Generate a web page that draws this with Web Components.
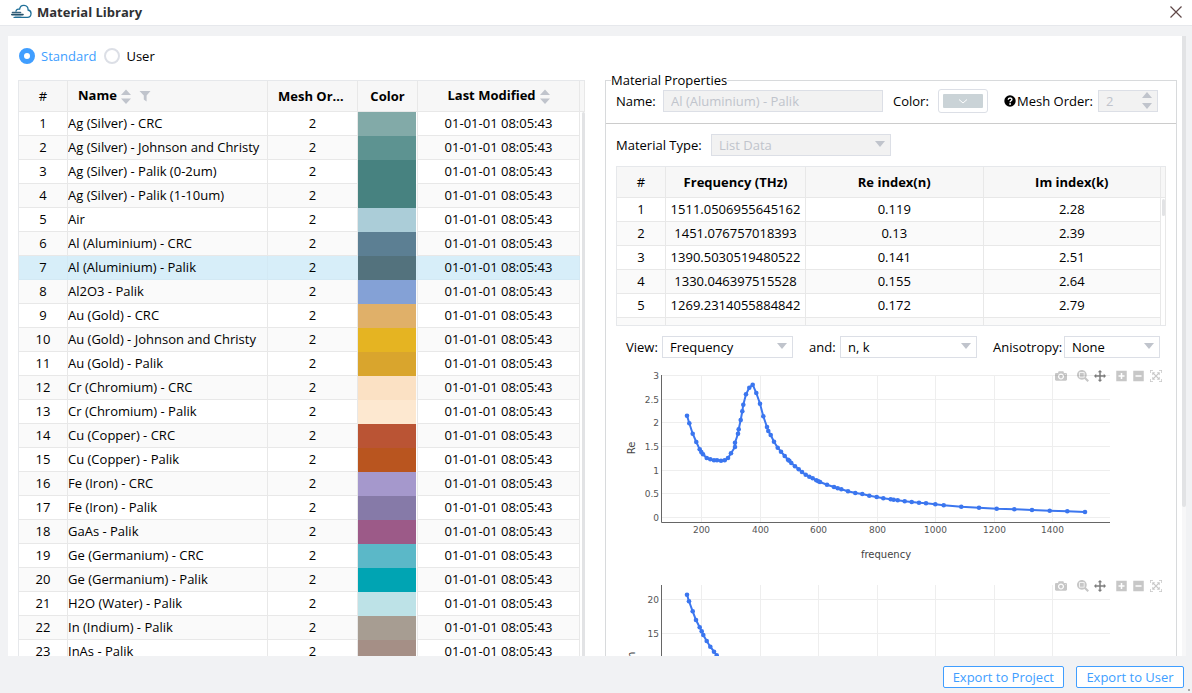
<!DOCTYPE html>
<html lang="en">
<head>
<meta charset="utf-8">
<title>Material Library</title>
<style>
html, body { margin: 0; height: 100%; }
body { font: 13px/16px "Open Sans", "Noto Sans", sans-serif; color: #000; overflow: hidden; }
</style>
</head>
<body>
<material-library></material-library>
<script>
const define = (name, html, setup) => {
  const template = document.createElement('template');
  template.innerHTML = html;
  customElements.define(name, class extends HTMLElement {
    connectedCallback() {
      if (this.shadowRoot) return;
      this.attachShadow({ mode: 'open' }).append(template.content.cloneNode(true));
      if (setup) setup(this, this.shadowRoot);
    }
  });
};

define('app-header', `
<style>
:host { display: flex; align-items: center; box-sizing: border-box; height: 26px; padding: 0 9px 2px 11px; background: #fff; border-bottom: 1px solid #e6e8ec; flex: none; }
h1 { margin: 0 auto 0 5px; font-size: 13px; line-height: 20px; font-weight: 700; color: #303133; }
button { border: 0; background: none; padding: 0; width: 14px; height: 14px; display: block; }
svg { display: block; }
</style>
<svg width="21" height="16" viewBox="0 0 21 16" fill="none" stroke="#1f7099" stroke-width="1.3" stroke-linecap="round">
  <path d="M5 7.2C5.200 5.600 7 4.800 8.600 5.200C9 2.500 11 1.200 13 1.300C15.600 1.500 17.200 3.400 17.100 6C19 6.400 20.200 8 20 10C19.800 12.200 18.300 13.300 16.500 13.300H3"/>
  <path d="M1.500 8.500H9.500" stroke="#35617c" stroke-width="1.600"/><path d="M.8 10.600H12" stroke="#24516b" stroke-width="1.600"/><path d="M4.500 12H10" stroke="#5d8aa4" stroke-width="1"/>
</svg>
<h1><slot></slot></h1>
<button type="button" aria-label="Close"><svg width="14" height="14" viewBox="0 0 14 14" stroke="#5f4747" stroke-width="1.200"><path d="M1.500 1.500L12.500 12.500M12.500 1.500L1.500 12.500"/></svg></button>
`);

define('source-picker', `
<style>
:host { display: flex; gap: 8px; height: 44px; padding-left: 1px; box-sizing: border-box; }
label { display: flex; align-items: center; gap: 6px; height: 40px; }
input { appearance: none; box-sizing: border-box; width: 16px; height: 16px; margin: 0; border: 2px solid #dcdfe6; border-radius: 50%; background: #fff; }
input:checked { border: 5px solid #409eff; }
input:checked + span { color: #409eff; }
</style>
<label><input type="radio" name="source" checked><span>Standard</span></label>
<label><input type="radio" name="source"><span>User</span></label>
`);

define('sort-arrows', `
<style>:host { display: inline-block; width: 10px; height: 16px; vertical-align: middle; } svg { display: block; }</style>
<svg width="10" height="16" viewBox="0 0 10 16" fill="#c0c4cc"><path d="M0 6L5 .5L10 6zM0 9.500L5 15L10 9.500z"/></svg>
`);

const gridStyle = `
:host { display: block; overflow: hidden; box-sizing: border-box; }
.frame { display: grid; grid-template-columns: minmax(0, 1fr) 5px; border: solid #e6e8eb; border-width: 1px 0 0 1px; }
table { width: 100%; table-layout: fixed; border-collapse: separate; border-spacing: 0; }
th, td { box-sizing: border-box; padding: 0; height: 24px; border: solid #e8e8e8; border-width: 0 1px 1px 0; text-align: center; font-weight: 400; white-space: nowrap; overflow: hidden; text-overflow: ellipsis; }
td { padding-bottom: 2px; }
thead th { height: 31px; background: #f7f7f7; font-weight: 700; }
thead th:first-child { font-weight: 400; }
tbody tr:nth-child(even) { background: #fafafa; }
.gutter { display: flex; flex-direction: column; }
.cap { box-sizing: border-box; flex: none; height: 31px; background: #f7f7f7; border: solid #e8e8e8; border-width: 0 1px 1px 0; }
.thumb { background: #e2e3e5; width: 3px; margin-left: auto; border-radius: 2px; }
`;

const materials = [
  ['Ag (Silver) - CRC', '#82aaa8'], ['Ag (Silver) - Johnson and Christy', '#5d9391'],
  ['Ag (Silver) - Palik (0-2um)', '#478280'], ['Ag (Silver) - Palik (1-10um)', '#478280'],
  ['Air', '#abcdd8'], ['Al (Aluminium) - CRC', '#5c7f93'], ['Al (Aluminium) - Palik', '#53727d'],
  ['Al2O3 - Palik', '#84a1d6'], ['Au (Gold) - CRC', '#e0b069'], ['Au (Gold) - Johnson and Christy', '#e5b422'],
  ['Au (Gold) - Palik', '#d9a52d'], ['Cr (Chromium) - CRC', '#fbe1c4'], ['Cr (Chromium) - Palik', '#fde8d0'],
  ['Cu (Copper) - CRC', '#ba5434'], ['Cu (Copper) - Palik', '#b9551f'], ['Fe (Iron) - CRC', '#a598cc'],
  ['Fe (Iron) - Palik', '#867aa8'], ['GaAs - Palik', '#9c5a88'], ['Ge (Germanium) - CRC', '#5bb8c8'],
  ['Ge (Germanium) - Palik', '#00a4b3'], ['H2O (Water) - Palik', '#bde2e7'], ['In (Indium) - Palik', '#a79d92'],
  ['InAs - Palik', '#a58f86']
];

define('material-table', `
<style>${gridStyle}
:host { flex: 1; min-height: 0; }
.name { text-align: left; }
thead .name { padding-left: 10px; }
thead .mesh { padding: 0 10px; }
sort-arrows { margin-left: 4px; }
svg { vertical-align: middle; margin-left: 8px; }
td.swatch { padding: 0 1px 0 0; border-bottom: 0; background-clip: content-box; }
tr.selected { background: #d7eef9 !important; }
tr.selected td { border-color: #d3e9f4; }
.thumb { flex: 1; }
</style>
<div class="frame">
<table>
<colgroup><col style="width:49px"><col><col style="width:90px"><col style="width:60px"><col style="width:162px"></colgroup>
<thead><tr><th>#</th><th class="name">Name<sort-arrows></sort-arrows><svg width="12" height="12" viewBox="0 0 12 12" fill="#c0c4cc"><path d="M.5 0H11.500L7.600 4.500V10.500L4.800 8.500V4.500z"/></svg></th><th class="mesh">Mesh Order</th><th>Color</th><th>Last Modified<sort-arrows></sort-arrows></th></tr></thead>
<tbody></tbody>
</table>
<div class="gutter"><div class="cap"></div><div class="thumb"></div></div>
</div>
`, (host, root) => {
  root.querySelector('tbody').innerHTML = materials.map(([name, color], i) =>
    `<tr${i === 6 ? ' class="selected"' : ''}><td>${i + 1}</td><td class="name">${name}</td><td>2</td><td class="swatch" style="background-color:${color}"></td><td>01-01-01 08:05:43</td></tr>`).join('');
});

define('index-table', `
<style>${gridStyle}
:host { height: 160px; border-bottom: 1px solid #e6e8eb; margin-top: 10px; }
.gutter { border-right: 1px solid #e8e8e8; margin-right: -1px; }
.frame { padding-right: 1px; grid-template-columns: minmax(0, 1fr) 4px; }
.cap { border-right: 0; }
.thumb { height: 17px; margin-top: 1px; }
</style>
<div class="frame">
<table>
<colgroup><col style="width:49px"><col style="width:140px"><col><col></colgroup>
<thead><tr><th>#</th><th>Frequency (THz)</th><th>Re index(n)</th><th>Im index(k)</th></tr></thead>
<tbody>
<tr><td>1</td><td>1511.0506955645162</td><td>0.119</td><td>2.28</td></tr>
<tr><td>2</td><td>1451.076757018393</td><td>0.13</td><td>2.39</td></tr>
<tr><td>3</td><td>1390.5030519480522</td><td>0.141</td><td>2.51</td></tr>
<tr><td>4</td><td>1330.046397515528</td><td>0.155</td><td>2.64</td></tr>
<tr><td>5</td><td>1269.2314055884842</td><td>0.172</td><td>2.79</td></tr>
<tr><td></td><td></td><td></td><td></td></tr>
</tbody>
</table>
<div class="gutter"><div class="cap"></div><div class="thumb"></div></div>
</div>
`);

define('select-field', `
<style>
:host { display: flex; align-items: center; }
label { flex: none; width: var(--label); }
.box { position: relative; flex: 1; min-width: 0; }
select { appearance: none; display: block; box-sizing: border-box; width: 100%; height: 22px; padding: 0 24px 0 7px; border: 1px solid #dcdfe6; border-radius: 0; background: #fff; font: inherit; color: #000; opacity: 1; }
select:disabled { background: #f2f2f2; color: #c0c4cc; }
svg { position: absolute; right: 6px; top: 7px; pointer-events: none; }
</style>
<label for="field"></label>
<div class="box"><select id="field"><option></option></select><svg width="10" height="6" viewBox="0 0 10 6"><path d="M0 0H10L5 6z" fill="#c0c4cc"/></svg></div>
`, (host, root) => {
  root.querySelector('label').textContent = host.getAttribute('label');
  root.querySelector('option').textContent = host.getAttribute('value');
  root.querySelector('select').disabled = host.hasAttribute('disabled');
});

define('property-bar', `
<style>
:host { display: flex; align-items: center; height: 24px; padding: 1px 18px 10px 10px; border-bottom: 1px solid #ccc; }
label { flex: none; }
input { box-sizing: border-box; height: 22px; padding: 0 7px; border: 1px solid #dcdfe6; border-radius: 0; background: #f2f2f2; font: inherit; color: #c0c4cc; appearance: none; }
input[type=number] { appearance: textfield; }
.name { width: 47px; }
#name { flex: 1; min-width: 0; margin-right: 10px; }
.color { width: 45px; }
#color { box-sizing: border-box; width: 50px; height: 24px; margin: 0 16px 0 0; padding: 4px; border: 1px solid #dcdfe6; border-radius: 3px; background: #fff; }
#color svg { display: block; width: 40px; height: 14px; background: #cad3d7; border-radius: 1px; }
.mesh { display: flex; align-items: center; gap: 1px; width: 94px; }
.spin { position: relative; width: 60px; }
.spin input { width: 100%; display: block; }
.spin svg { position: absolute; right: 6px; top: 2px; }
</style>
<label class="name" for="name">Name:</label><input id="name" value="Al (Aluminium) - Palik" disabled>
<label class="color" for="color">Color:</label><button id="color" type="button" disabled><svg viewBox="0 0 40 14" fill="none" stroke="#fff"><path d="M16 5.500L20 9L24 5.500"/></svg></button>
<label class="mesh" for="mesh"><svg width="12" height="12" viewBox="0 0 12 12"><circle cx="6" cy="6" r="5.700"/><path d="M4.200 4.700C4.200 2.400 7.900 2.400 7.900 4.500C7.900 5.800 6.100 5.800 6.100 7.200" fill="none" stroke="#fff" stroke-width="1.400"/><circle cx="6.100" cy="9" r=".9" fill="#fff"/></svg>Mesh Order:</label>
<div class="spin"><input id="mesh" type="number" value="2" disabled><svg width="10" height="18" viewBox="0 0 10 18" fill="#c0c4cc"><path d="M0 6L5 0L10 6zM0 11L5 17L10 11z"/></svg></div>
`);

const icons = {
  Download: 'm500 450c-83 0-150-67-150-150 0-83 67-150 150-150 83 0 150 67 150 150 0 83-67 150-150 150z m400 150h-120c-16 0-34 13-39 29l-31 93c-6 15-23 28-40 28h-340c-16 0-34-13-39-28l-31-94c-6-15-23-28-40-28h-120c-55 0-100-45-100-100v-450c0-55 45-100 100-100h800c55 0 100 45 100 100v450c0 55-45 100-100 100z m-400-550c-138 0-250 112-250 250 0 138 112 250 250 250 138 0 250-112 250-250 0-138-112-250-250-250z m365 380c-19 0-35 16-35 35 0 19 16 35 35 35 19 0 35-16 35-35 0-19-16-35-35-35z',
  Zoom: 'm1000-25l-250 251c40 63 63 138 63 218 0 224-182 406-407 406-224 0-406-182-406-406s183-406 407-406c80 0 155 22 218 62l250-250 125 125z m-812 250l0 438 437 0 0-438-437 0z m62 375l313 0 0-312-313 0 0 312z',
  Pan: 'm1000 350l-187 188 0-125-250 0 0 250 125 0-188 187-187-187 125 0 0-250-250 0 0 125-188-188 186-187 0 125 252 0 0-250-125 0 187-188 188 188-125 0 0 250 250 0 0-126 187 188z',
  'Zoom in': 'm1 787l0-875 875 0 0 875-875 0z m687-500l-187 0 0-187-125 0 0 187-188 0 0 125 188 0 0 187 125 0 0-187 187 0 0-125z',
  'Zoom out': 'm0 788l0-876 875 0 0 876-875 0z m688-500l-500 0 0 125 500 0 0-125z',
  Autoscale: 'm250 850l-187 0-63 0 0-62 0-188 63 0 0 188 187 0 0 62z m688 0l-188 0 0-62 188 0 0-188 62 0 0 188 0 62-62 0z m-875-938l0 188-63 0 0-188 0-62 63 0 187 0 0 62-187 0z m875 188l0-188-188 0 0-62 188 0 62 0 0 62 0 188-62 0z m-125 188l-1 0-93-94-156 156 156 156 92-93 2 0 0 250-250 0 0-2 93-92-156-156-156 156 94 92 0 2-250 0 0-250 0 0 93 93 157-156-157-156-93 94 0 0 0-250 250 0 0 0-94 93 156 157 156-157-93-93 0 0 250 0 0 250z'
};

define('chart-tools', `
<style>
:host { display: flex; }
button { display: block; width: 17px; height: 12px; padding: 0; border: 0; background: none; }
svg { display: block; margin: auto; fill: #444; fill-opacity: .3; }
.gap { margin-left: 5px; }
.on svg { fill-opacity: .7; }
</style>`, (host, root) => {
  for (const [name, d] of Object.entries(icons)) {
    const small = name === 'Zoom in' || name === 'Zoom out';
    const cls = name === 'Pan' ? 'on' : name === 'Zoom' || name === 'Zoom in' ? 'gap' : '';
    root.innerHTML += `<button type="button" aria-label="${name}" class="${cls}"><svg width="${small ? 11 : 12}" height="12" viewBox="0 0 ${small ? 875 : 1000} 1000"><path transform="matrix(1 0 0 -1 0 850)" d="${d}"/></svg></button>`;
  }
});

/* Curve points are in thirds of a pixel, measured from (-16, 6) of the chart. */
const series = {
  Re: {
    ticks: [['0', 154], ['0.5', 130], ['1', 107], ['1.5', 83], ['2', 59], ['2.5', 36], ['3', 12]],
    points: [[261,137],[268,160],[278,191],[289,216],[299,238],[304,246],[309,253],[320,264],[331,268],[342,271],[351,271],[363,272],[374,271],[384,264],[393,250],[405,231],[405,218],[414,191],[416,178],[422,150],[427,124],[430,104],[438,73],[448,53],[458,44],[469,69],[480,101],[490,139],[501,171],[505,183],[512,195],[522,215],[533,233],[543,245],[554,258],[564,269],[568,272],[574,279],[585,289],[596,298],[606,306],[617,314],[628,320],[638,325],[649,331],[655,334],[660,336],[681,344],[702,351],[713,355],[724,358],[744,364],[766,369],[787,372],[808,377],[830,381],[850,385],[872,388],[881,389],[893,391],[914,394],[935,396],[957,398],[978,400],[1006,403],[1031,406],[1084,410],[1137,413],[1190,416],[1243,418],[1296,420],[1349,422],[1402,424],[1455,426]]
  },
  Im: {
    ticks: [['20', 26], ['15', 60], ['10', 95], ['5', 130]],
    points: [[261,44],[267,64],[278,94],[288,120],[299,142],[305,154],[310,165],[320,183],[331,200],[342,215],[350,226],[363,239],[375,249]]
  }
};

define('index-chart', `
<style>
:host { display: block; position: relative; }
chart-tools { position: absolute; top: 6px; right: 2px; }
svg { display: block; width: 100%; }
text { font-family: "DejaVu Sans", sans-serif; font-size: 9px; fill: #555; text-anchor: middle; }
text.y { text-anchor: end; }
text.title { fill: #444; font-size: 10px; }
.grid { stroke: #eee; }
.axis { stroke: #666; fill: none; }
.line { stroke: #3b76ef; stroke-width: 2; fill: none; }
circle { fill: #3b76ef; }
</style>
<svg viewBox="0 0 550 210"></svg>
<chart-tools></chart-tools>
`, (host, root) => {
  const title = host.getAttribute('title-y');
  const { ticks, points } = series[title];
  const xy = points.map(([x, y]) => [(x / 3 - 16).toFixed(1), (y / 3 + 6).toFixed(1)]);
  const columns = [[200, 86], [400, 145], [600, 203], [800, 262], [1000, 320], [1200, 379], [1400, 437]];
  root.querySelector('svg').innerHTML =
    columns.map(([f, x]) => `<path class="grid" d="M${x - .5} 11V158"/><text x="${x - .5}" y="169">${f}</text>`).join('') +
    ticks.map(([v, y]) => `<path class="grid" d="M46 ${y - .5}H494"/><text class="y" x="43" y="${y + 3}">${v}</text>`).join('') +
    `<path class="axis" d="M45.500 11V158.500H494"/>` +
    `<path class="line" d="M${xy.map(p => p.join(' ')).join('L')}"/>` +
    xy.map(([x, y]) => `<circle cx="${x}" cy="${y}" r="2.300"/>`).join('') +
    `<text class="title" x="270" y="194">frequency</text><text class="title" transform="translate(19 84) rotate(-90)">${title}</text>`;
});

define('material-properties', `
<style>
:host { display: block; padding-top: 36px; min-width: 0; }
fieldset { margin: 0; padding: 0; border: 1px solid #d8dadc; min-width: 0; }
legend { margin-left: 5px; padding: 0; }
.body { padding: 10px 10px 0; }
.type { width: 275px; --label: 95px; }
.view { display: flex; gap: 16px; margin: 10px 6px 6px 10px; }
.view > :nth-child(1) { --label: 36px; flex: 167 1 0; }
.view > :nth-child(2) { --label: 31px; flex: 168 1 0; }
.view > :nth-child(3) { --label: 71px; flex: 167 1 0; }
</style>
<fieldset>
<legend>Material Properties</legend>
<property-bar></property-bar>
<div class="body">
<select-field class="type" label="Material Type:" value="List Data" disabled></select-field>
<index-table></index-table>
<div class="view">
<select-field label="View:" value="Frequency"></select-field>
<select-field label="and:" value="n, k"></select-field>
<select-field label="Anisotropy:" value="None"></select-field>
</div>
<index-chart title-y="Re"></index-chart>
<index-chart title-y="Im"></index-chart>
</div>
</fieldset>
`);

define('action-bar', `
<style>
:host { display: flex; flex: none; justify-content: flex-end; align-items: center; gap: 12px; height: 37px; padding: 5px 8px 0 0; box-sizing: border-box; position: relative; }
button { box-sizing: border-box; height: 22px; padding: 0 9px; border: 1px solid #409eff; border-radius: 2px; background: #fff; color: #409eff; font: inherit; white-space: nowrap; min-width: 108px; }
i { position: absolute; right: 2px; bottom: 2px; width: 2px; height: 2px; background: #aaa; }
</style>
<button type="button">Export to Project</button><button type="button">Export to User</button><i></i>
`);

define('material-library', `
<style>
:host { display: flex; flex-direction: column; height: 100vh; background: #f1f2f4; }
main { flex: 1; min-height: 0; overflow: hidden; display: grid; grid-template-columns: 567fr 572fr; grid-template-rows: minmax(0, 1fr); column-gap: 20px; margin: 10px 6px 0 8px; padding: 0 9px 0 10px; background: #fff; position: relative; }
.left { display: flex; flex-direction: column; min-width: 0; min-height: 0; }
.bar { position: absolute; top: 0; right: 0; width: 4px; height: 100%; background: #f7f7f8; }
.bar::before { content: ""; display: block; height: 76%; background: #e2e3e5; border-radius: 0 0 2px 2px; }
</style>
<app-header>Material Library</app-header>
<main>
<div class="left"><source-picker></source-picker><material-table></material-table></div>
<material-properties></material-properties>
<div class="bar"></div>
</main>
<action-bar></action-bar>
`);
</script>
</body>
</html>
